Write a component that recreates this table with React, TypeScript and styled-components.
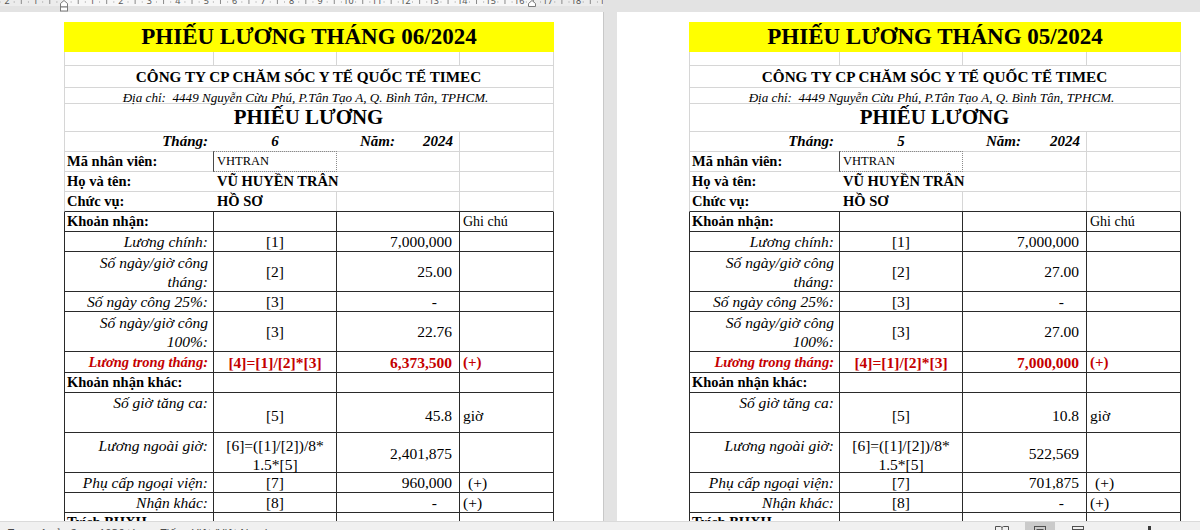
import React from 'react';
import styled, { createGlobalStyle } from 'styled-components';

const SERIF = '"Liberation Serif", "Times New Roman", "DejaVu Serif", serif';
const UI = '"Noto Sans", "Liberation Sans", "DejaVu Sans", sans-serif';
const DARK = '#2a2a2a';
const GRID = '#d6d6d6';
const RED = '#c40000';

const GlobalStyle = createGlobalStyle`
  html, body { margin: 0; padding: 0; }
  body { width: 1200px; height: 530px; overflow: hidden; background: #e3e3e3; }
  #root { width: 1200px; height: 530px; }
`;

type Tone = 'none' | 'light' | 'dark';
const tone = (t: Tone = 'none') => (t === 'dark' ? DARK : t === 'light' ? GRID : 'transparent');

const Screen = styled.div`
  width: 1200px;
  height: 530px;
  display: flex;
  flex-direction: column;
  overflow: hidden;
  background: #e3e3e3;
`;

const TopStrip = styled.div`
  height: 12px;
  flex: none;
  display: flex;
  background: #e3e3e3;
`;

const RulerBox = styled.div`
  width: 603px;
  height: 12px;
  flex: none;
  svg { display: block; }
`;

const Workspace = styled.div`
  flex: 1;
  min-height: 0;
  display: flex;
  overflow: hidden;
`;

const Page = styled.div<{ $width?: number; $inset: number }>`
  ${p => (p.$width ? `width: ${p.$width}px; flex: none;` : 'flex: 1;')}
  background: #ffffff;
  box-sizing: border-box;
  padding: 10px 0 0 ${p => p.$inset}px;
  overflow: hidden;
`;

const Gutter = styled.div`
  width: 14px;
  flex: none;
  box-sizing: border-box;
  background: #e3e3e3;
  border-left: 1px solid #c8c8c8;
`;

const Sheet = styled.div<{ $cols: string }>`
  --cols: ${p => p.$cols};
  display: flex;
  flex-direction: column;
  width: max-content;
  font-family: ${SERIF};
  color: #000;
`;

const TitleBar = styled.div`
  height: 30px;
  background: #ffff00;
  display: flex;
  align-items: center;
  justify-content: center;
  font-size: 23px;
  font-weight: 700;
  line-height: 30px;
  white-space: nowrap;
`;

const Row = styled.div<{ $h: number; $side?: Tone; $bottom?: Tone }>`
  display: grid;
  grid-template-columns: var(--cols);
  height: ${p => p.$h}px;
  box-sizing: border-box;
  border-left: 1px solid ${p => tone(p.$side)};
  border-right: 1px solid ${p => tone(p.$side)};
  border-bottom: 1px solid ${p => tone(p.$bottom ?? p.$side)};
`;

const hMap = { left: 'flex-start', center: 'center', right: 'flex-end', between: 'space-between' };
const vMap = { top: 'flex-start', center: 'center', bottom: 'flex-end' };

const Cell = styled.div<{
  $edge?: Tone;
  $h?: keyof typeof hMap;
  $v?: keyof typeof vMap;
  $span?: number;
  $pl?: number;
  $pr?: number;
  $pt?: number;
}>`
  grid-column: span ${p => p.$span ?? 1};
  display: flex;
  justify-content: ${p => hMap[p.$h ?? 'left']};
  align-items: ${p => vMap[p.$v ?? 'center']};
  text-align: ${p => (p.$h === 'right' ? 'right' : p.$h === 'center' ? 'center' : 'left')};
  border-right: 1px solid ${p => tone(p.$edge)};
  padding: ${p => p.$pt ?? 0}px ${p => p.$pr ?? 5}px 0 ${p => p.$pl ?? 3}px;
  box-sizing: border-box;
  white-space: nowrap;
  min-width: 0;
  line-height: 19px;
`;

const IdCell = styled(Cell)`
  border: 1px dotted #8a8a8a;
  border-left: 1px solid #4a4a4a;
  margin: -1px 0 -1px -1px;
`;

const Txt = styled.span<{ $size: number; $bold?: boolean; $italic?: boolean; $red?: boolean }>`
  font-size: ${p => p.$size}px;
  font-weight: ${p => (p.$bold ? 700 : 400)};
  font-style: ${p => (p.$italic ? 'italic' : 'normal')};
  color: ${p => (p.$red ? RED : '#000')};
`;

const StatusBar = styled.div`
  height: 9px;
  flex: none;
  display: flex;
  overflow: hidden;
  background: #f0f0f0;
  border-top: 1px solid #dadada;
  box-sizing: border-box;
  font-family: ${UI};
  font-size: 11px;
  color: #4a4a4a;
`;

const StatusText = styled.div`
  display: flex;
  gap: 22px;
  padding: 4px 0 0 8px;
  line-height: 14px;
  white-space: nowrap;
`;

const ViewGroup = styled.div`
  margin-left: auto;
  display: flex;
  gap: 8px;
`;

const ViewButton = styled.div<{ $active?: boolean }>`
  width: 30px;
  height: 22px;
  display: flex;
  justify-content: center;
  padding-top: 3px;
  box-sizing: border-box;
  background: ${p => (p.$active ? '#cacaca' : 'transparent')};
  color: #505050;
`;

const ZoomSlider = styled.div`
  width: 107px;
  flex: none;
  display: flex;
  padding: 4px 0 0 55px;
  box-sizing: border-box;
`;

const Thumb = styled.div`
  width: 3px;
  height: 12px;
  background: #3a3a3a;
`;

const UNIT = 28.45;
const ORIGIN = 64;

const RulerDrawing: React.FC = () => {
  const labels: React.ReactNode[] = [];
  const ticks: React.ReactNode[] = [];
  for (let n = -3; n <= 19; n++) {
    const x = ORIGIN + n * UNIT;
    if (n !== 0) {
      labels.push(
        <text key={'l' + n} x={x} y={4.2} fontSize={9} fontFamily={UI} fill="#555" textAnchor="middle">
          {Math.abs(n)}
        </text>
      );
    }
    [0.25, 0.5, 0.75].forEach(f => {
      const tx = x + f * UNIT;
      ticks.push(
        f === 0.5 ? (
          <line key={`t${n}-${f}`} x1={tx} x2={tx} y1={0} y2={4} stroke="#8a8a8a" strokeWidth={1} />
        ) : (
          <rect key={`t${n}-${f}`} x={tx - 0.5} y={1.5} width={1} height={1} fill="#9a9a9a" />
        )
      );
    });
  }
  return (
    <svg width={603} height={12} viewBox="0 0 603 12">
      <rect x={0} y={0} width={603} height={12} fill="#e3e3e3" />
      <rect x={0} y={0} width={603} height={6} fill="#ececec" />
      <rect x={64} y={0} width={468} height={6} fill="#f7f7f7" />
      {ticks}
      {labels}
      <path d="M60.5 7 L60.5 3.5 L64 0.5 L67.5 3.5 L67.5 7 Z" fill="#fff" stroke="#7a7a7a" strokeWidth={1} />
      <rect x={60.5} y={7} width={7} height={4} fill="#fff" stroke="#7a7a7a" strokeWidth={1} />
      <path d="M528.5 6.5 L528.5 3.5 L532 0.5 L535.5 3.5 L535.5 6.5 Z" fill="#fff" stroke="#7a7a7a" strokeWidth={1} />
    </svg>
  );
};

type Slip = {
  mm: string;
  m: string;
  workDays: string;
  days100: string;
  monthly: string;
  otHours: string;
  otPay: string;
  allowance: string;
};

const june: Slip = {
  mm: '06',
  m: '6',
  workDays: '25.00',
  days100: '22.76',
  monthly: '6,373,500',
  otHours: '45.8',
  otPay: '2,401,875',
  allowance: '960,000',
};

const may: Slip = {
  mm: '05',
  m: '5',
  workDays: '27.00',
  days100: '27.00',
  monthly: '7,000,000',
  otHours: '10.8',
  otPay: '522,569',
  allowance: '701,875',
};

const LABEL = 14.5;
const BODY = 15.5;

const PaySlip: React.FC<{ d: Slip; cols: string }> = ({ d, cols }) => (
  <Sheet $cols={cols}>
    <TitleBar>PHIẾU LƯƠNG THÁNG {d.mm}/2024</TitleBar>
    <Row $h={14} $side="light">
      <Cell $edge="light" />
      <Cell $edge="light" />
      <Cell $edge="light" />
      <Cell />
    </Row>
    <Row $h={22} $side="light">
      <Cell $span={4} $h="center" $pr={0} $pl={0}>
        <Txt $size={15.2} $bold>CÔNG TY CP CHĂM SÓC Y TẾ QUỐC TẾ TIMEC</Txt>
      </Cell>
    </Row>
    <Row $h={16} $side="light">
      <Cell $span={4} $h="center" $pr={6} $pl={0}>
        <Txt $size={13.1} $italic>
          Địa chỉ:{'\u00a0 '}4449 Nguyễn Cừu Phú, P.Tân Tạo A, Q. Bình Tân, TPHCM.
        </Txt>
      </Cell>
    </Row>
    <Row $h={28} $side="light">
      <Cell $span={4} $h="center" $pr={0} $pl={0}>
        <Txt $size={20.9} $bold>PHIẾU LƯƠNG</Txt>
      </Cell>
    </Row>
    <Row $h={20} $side="light">
      <Cell $h="right">
        <Txt $size={15} $bold $italic>Tháng:</Txt>
      </Cell>
      <Cell $h="center" $pl={0} $pr={0}>
        <Txt $size={15} $bold $italic>{d.m}</Txt>
      </Cell>
      <Cell $edge="light" $h="between" $pl={23} $pr={6}>
        <Txt $size={15} $bold $italic>Năm:</Txt>
        <Txt $size={15} $bold $italic>2024</Txt>
      </Cell>
      <Cell />
    </Row>
    <Row $h={20} $side="light">
      <Cell $pl={2}>
        <Txt $size={LABEL} $bold>Mã nhân viên:</Txt>
      </Cell>
      <IdCell $pl={3}>
        <Txt $size={12.5}>VHTRAN</Txt>
      </IdCell>
      <Cell $edge="light" />
      <Cell />
    </Row>
    <Row $h={20} $side="light">
      <Cell $pl={2}>
        <Txt $size={LABEL} $bold>Họ và tên:</Txt>
      </Cell>
      <Cell>
        <Txt $size={LABEL} $bold>VŨ HUYỀN TRÂN</Txt>
      </Cell>
      <Cell $edge="light" />
      <Cell />
    </Row>
    <Row $h={20} $side="light" $bottom="dark">
      <Cell $pl={2}>
        <Txt $size={LABEL} $bold>Chức vụ:</Txt>
      </Cell>
      <Cell $edge="light">
        <Txt $size={LABEL} $bold>HỒ SƠ</Txt>
      </Cell>
      <Cell $edge="light" />
      <Cell />
    </Row>

    <Row $h={20} $side="dark">
      <Cell $edge="dark" $pl={2}>
        <Txt $size={LABEL} $bold>Khoản nhận:</Txt>
      </Cell>
      <Cell $edge="dark" />
      <Cell $edge="dark" />
      <Cell>
        <Txt $size={14}>Ghi chú</Txt>
      </Cell>
    </Row>
    <Row $h={20} $side="dark">
      <Cell $edge="dark" $h="right">
        <Txt $size={BODY} $italic>Lương chính:</Txt>
      </Cell>
      <Cell $edge="dark" $h="center" $pl={0} $pr={0}>
        <Txt $size={BODY}>[1]</Txt>
      </Cell>
      <Cell $edge="dark" $h="right" $pr={7}>
        <Txt $size={BODY}>7,000,000</Txt>
      </Cell>
      <Cell />
    </Row>
    <Row $h={40} $side="dark">
      <Cell $edge="dark" $h="right">
        <Txt $size={BODY} $italic>
          Số ngày/giờ công
          <br />
          tháng:
        </Txt>
      </Cell>
      <Cell $edge="dark" $h="center" $pl={0} $pr={0}>
        <Txt $size={BODY}>[2]</Txt>
      </Cell>
      <Cell $edge="dark" $h="right" $pr={7}>
        <Txt $size={BODY}>{d.workDays}</Txt>
      </Cell>
      <Cell />
    </Row>
    <Row $h={20} $side="dark">
      <Cell $edge="dark" $h="right">
        <Txt $size={BODY} $italic>Số ngày công 25%:</Txt>
      </Cell>
      <Cell $edge="dark" $h="center" $pl={0} $pr={0}>
        <Txt $size={BODY}>[3]</Txt>
      </Cell>
      <Cell $edge="dark" $h="right" $pr={22}>
        <Txt $size={BODY}>-</Txt>
      </Cell>
      <Cell />
    </Row>
    <Row $h={40} $side="dark">
      <Cell $edge="dark" $h="right">
        <Txt $size={BODY} $italic>
          Số ngày/giờ công
          <br />
          100%:
        </Txt>
      </Cell>
      <Cell $edge="dark" $h="center" $pl={0} $pr={0}>
        <Txt $size={BODY}>[3]</Txt>
      </Cell>
      <Cell $edge="dark" $h="right" $pr={7}>
        <Txt $size={BODY}>{d.days100}</Txt>
      </Cell>
      <Cell />
    </Row>
    <Row $h={21} $side="dark">
      <Cell $edge="dark" $h="right">
        <Txt $size={LABEL} $bold $italic $red>
          Lương trong tháng:
        </Txt>
      </Cell>
      <Cell $edge="dark" $h="center" $pl={0} $pr={0}>
        <Txt $size={BODY} $bold $red>
          [4]=[1]/[2]*[3]
        </Txt>
      </Cell>
      <Cell $edge="dark" $h="right" $pr={7}>
        <Txt $size={BODY} $bold $red>
          {d.monthly}
        </Txt>
      </Cell>
      <Cell>
        <Txt $size={15} $bold $red>
          (+)
        </Txt>
      </Cell>
    </Row>
    <Row $h={20} $side="dark">
      <Cell $edge="dark" $pl={2}>
        <Txt $size={LABEL} $bold>Khoản nhận khác:</Txt>
      </Cell>
      <Cell $edge="dark" />
      <Cell $edge="dark" />
      <Cell />
    </Row>
    <Row $h={40} $side="dark">
      <Cell $edge="dark" $h="right" $v="top">
        <Txt $size={BODY} $italic>Số giờ tăng ca:</Txt>
      </Cell>
      <Cell $edge="dark" $h="center" $pl={0} $pr={0} $pt={5}>
        <Txt $size={BODY}>[5]</Txt>
      </Cell>
      <Cell $edge="dark" $h="right" $pr={7} $pt={5}>
        <Txt $size={BODY}>{d.otHours}</Txt>
      </Cell>
      <Cell $pt={5}>
        <Txt $size={BODY}>giờ</Txt>
      </Cell>
    </Row>
    <Row $h={40} $side="dark">
      <Cell $edge="dark" $h="right" $v="top" $pt={3}>
        <Txt $size={BODY} $italic>Lương ngoài giờ:</Txt>
      </Cell>
      <Cell $edge="dark" $h="center" $v="top" $pl={0} $pr={0} $pt={3}>
        <Txt $size={BODY}>
          [6]=([1]/[2])/8*
          <br />
          1.5*[5]
        </Txt>
      </Cell>
      <Cell $edge="dark" $h="right" $pr={7}>
        <Txt $size={BODY}>{d.otPay}</Txt>
      </Cell>
      <Cell />
    </Row>
    <Row $h={20} $side="dark">
      <Cell $edge="dark" $h="right">
        <Txt $size={BODY} $italic>Phụ cấp ngoại viện:</Txt>
      </Cell>
      <Cell $edge="dark" $h="center" $pl={0} $pr={0}>
        <Txt $size={BODY}>[7]</Txt>
      </Cell>
      <Cell $edge="dark" $h="right" $pr={7}>
        <Txt $size={BODY}>{d.allowance}</Txt>
      </Cell>
      <Cell $pl={8}>
        <Txt $size={BODY}>(+)</Txt>
      </Cell>
    </Row>
    <Row $h={20} $side="dark">
      <Cell $edge="dark" $h="right">
        <Txt $size={BODY} $italic>Nhận khác:</Txt>
      </Cell>
      <Cell $edge="dark" $h="center" $pl={0} $pr={0}>
        <Txt $size={BODY}>[8]</Txt>
      </Cell>
      <Cell $edge="dark" $h="right" $pr={22}>
        <Txt $size={BODY}>-</Txt>
      </Cell>
      <Cell>
        <Txt $size={BODY}>(+)</Txt>
      </Cell>
    </Row>
    <Row $h={20} $side="dark">
      <Cell $edge="dark" $pl={2}>
        <Txt $size={LABEL} $bold>Trích BHXH</Txt>
      </Cell>
      <Cell $edge="dark" />
      <Cell $edge="dark" />
      <Cell />
    </Row>
  </Sheet>
);

const ReadIcon = () => (
  <svg width={16} height={13} viewBox="0 0 16 13">
    <path d="M1.5 1.5h5l1.5 1 1.5-1h5v9h-5l-1.5 1-1.5-1h-5z" fill="none" stroke="currentColor" />
    <path d="M8 2.5v8" stroke="currentColor" />
  </svg>
);

const PrintIcon = () => (
  <svg width={14} height={13} viewBox="0 0 14 13">
    <rect x={1.5} y={1.5} width={11} height={10} fill="none" stroke="currentColor" />
    <path d="M3.5 4.5h7M3.5 6.5h7M3.5 8.5h5" stroke="currentColor" />
  </svg>
);

const WebIcon = () => (
  <svg width={14} height={13} viewBox="0 0 14 13">
    <rect x={1.5} y={1.5} width={11} height={10} fill="none" stroke="currentColor" />
    <path d="M1.5 4.5h11M3.5 7h7" stroke="currentColor" />
  </svg>
);

export default function App() {
  return (
    <>
      <GlobalStyle />
      <Screen>
        <TopStrip>
          <RulerBox>
            <RulerDrawing />
          </RulerBox>
        </TopStrip>
        <Workspace>
          <Page $width={603} $inset={64}>
            <PaySlip d={june} cols="149px 123px 123px 93px" />
          </Page>
          <Gutter />
          <Page $inset={72}>
            <PaySlip d={may} cols="150px 123px 124px 93px" />
          </Page>
        </Workspace>
        <StatusBar>
          <StatusText>
            <span>Trang 1 của 2</span>
            <span>1036 từ</span>
            <span>Tiếng Việt (Việt Nam)</span>
          </StatusText>
          <ViewGroup>
            <ViewButton>
              <ReadIcon />
            </ViewButton>
            <ViewButton $active>
              <PrintIcon />
            </ViewButton>
            <ViewButton>
              <WebIcon />
            </ViewButton>
          </ViewGroup>
          <ZoomSlider>
            <Thumb />
          </ZoomSlider>
        </StatusBar>
      </Screen>
    </>
  );
}
